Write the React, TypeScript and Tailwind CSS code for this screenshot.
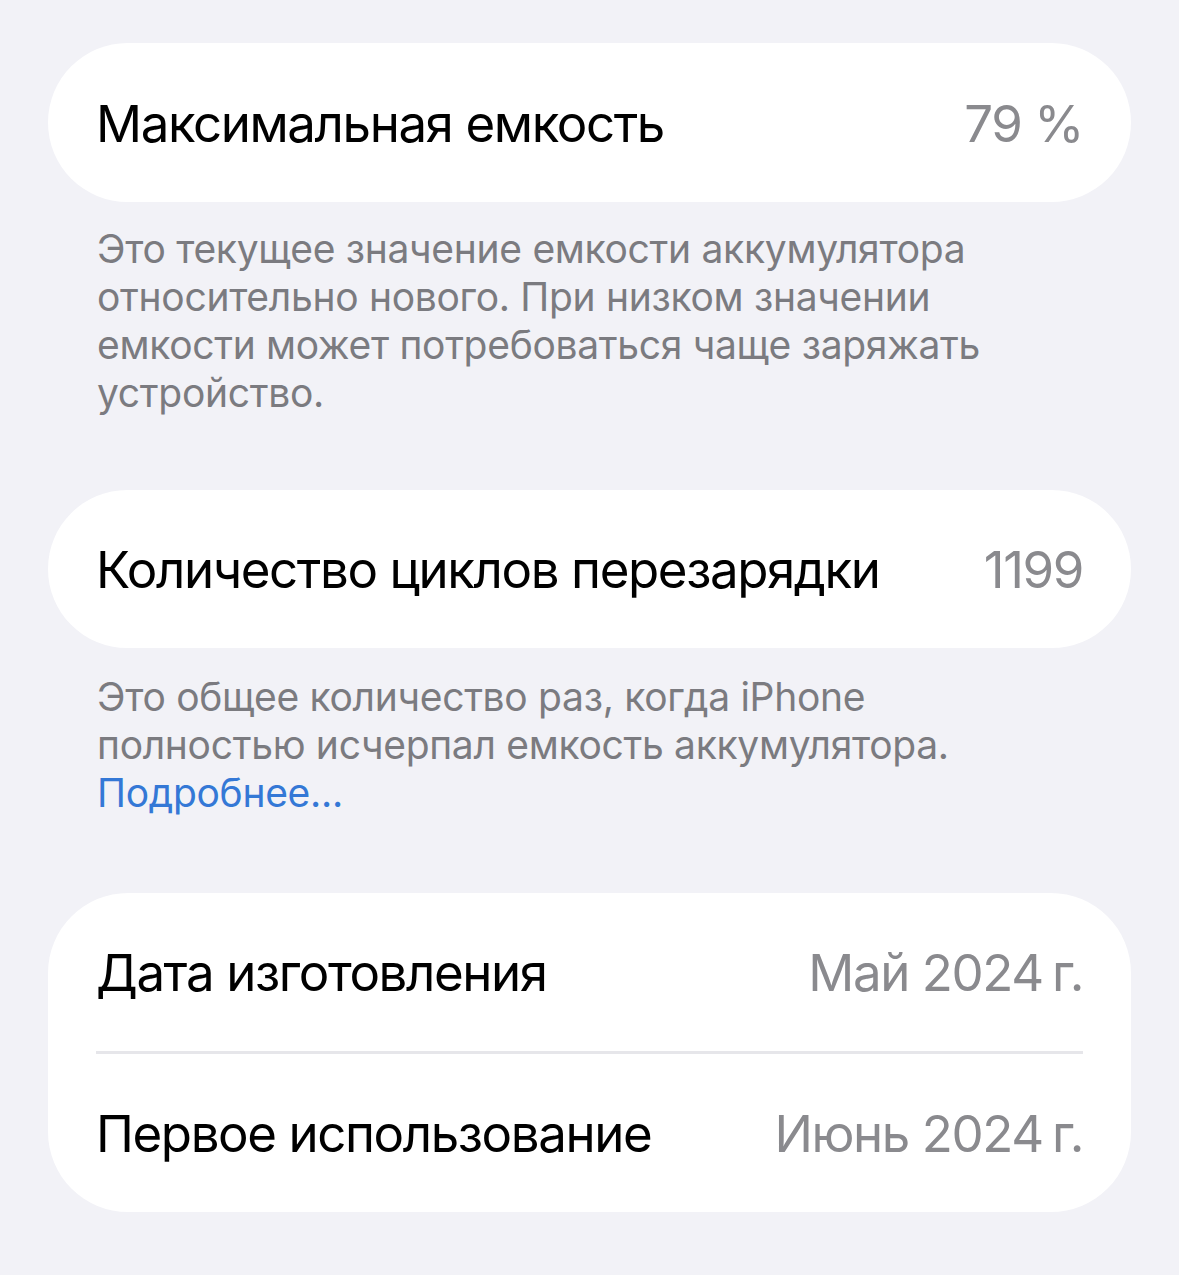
export default function App() {
  return (
    <div
      className="min-h-[1275px] w-full bg-[#f2f2f7] px-[48px] pt-[43px] pb-[63px]"
      style={{ fontFamily: 'Inter, "Noto Sans", sans-serif' }}
    >
      <div className="flex h-[159px] items-center justify-between rounded-[80px] bg-white px-[48px] pt-[3px] text-[51px] tracking-[-1.4px]">
        <span className="text-black">Максимальная емкость</span>
        <span className="text-[#8a8a8e]">79 %</span>
      </div>
      <p className="px-[49px] pt-[23px] pb-[73px] text-[39px] leading-[48px] tracking-[-0.3px] text-[#7b7b80]">
        Это текущее значение емкости аккумулятора относительно нового. При низком значении емкости может потребоваться чаще заряжать устройство.
      </p>

      <div className="flex h-[158px] items-center justify-between rounded-[80px] bg-white px-[48px] pt-[3px] text-[51px] tracking-[-1.4px]">
        <span className="text-black">Количество циклов перезарядки</span>
        <span className="text-[#8a8a8e]">1199</span>
      </div>
      <p className="px-[49px] pt-[25px] pb-[76px] text-[39px] leading-[48px] tracking-[-0.3px] text-[#7b7b80]">
        Это общее количество раз, когда iPhone полностью исчерпал емкость аккумулятора.
        <br />
        <span className="text-[#3478d6]">Подробнее...</span>
      </p>

      <div className="rounded-[80px] bg-white pl-[48px] text-[51px] tracking-[-1.4px]">
        <div className="flex h-[158px] items-center justify-between pt-[3px] pr-[48px]">
          <span className="text-black">Дата изготовления</span>
          <span className="text-[#8a8a8e]">Май 2024{'\u202F'}г.</span>
        </div>
        <div className="mr-[48px] h-[3px] bg-[#e6e6ea]" />
        <div className="flex h-[158px] items-center justify-between pt-[3px] pr-[48px]">
          <span className="text-black">Первое использование</span>
          <span className="text-[#8a8a8e]">Июнь 2024{'\u202F'}г.</span>
        </div>
      </div>
    </div>
  )
}
